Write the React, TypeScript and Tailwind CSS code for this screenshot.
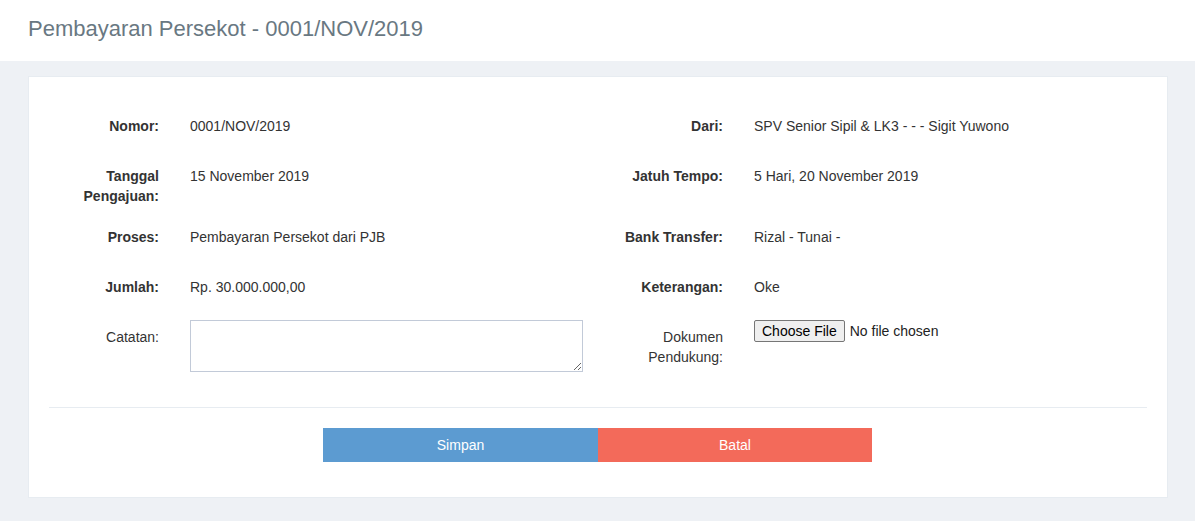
const font = "font-['Liberation_Sans',Arial,sans-serif]";

function Field({
  label,
  bold = true,
  labelWidth,
  children,
}: {
  label: React.ReactNode;
  bold?: boolean;
  labelWidth: string;
  children: React.ReactNode;
}) {
  return (
    <div className="flex flex-1">
      <div
        className={`${labelWidth} shrink-0 pt-[7px] text-right leading-[20px] ${
          bold ? "font-bold" : ""
        }`}
      >
        {label}
      </div>
      <div className="ml-[31px] mr-[15px] flex-1">{children}</div>
    </div>
  );
}

function Static({ children }: { children: React.ReactNode }) {
  return <div className="py-[7px] leading-[20px]">{children}</div>;
}

const rows: {
  h: string;
  left: [React.ReactNode, string];
  right: [React.ReactNode, string];
}[] = [
  { h: "h-[50px]", left: ["Nomor:", "0001/NOV/2019"], right: ["Dari:", "SPV Senior Sipil & LK3 - - - Sigit Yuwono"] },
  {
    h: "h-[61px]",
    left: [
      <>
        Tanggal
        <br />
        Pengajuan:
      </>,
      "15 November 2019",
    ],
    right: ["Jatuh Tempo:", "5 Hari, 20 November 2019"],
  },
  { h: "h-[50px]", left: ["Proses:", "Pembayaran Persekot dari PJB"], right: ["Bank Transfer:", "Rizal - Tunai -"] },
  { h: "h-[50px]", left: ["Jumlah:", "Rp. 30.000.000,00"], right: ["Keterangan:", "Oke"] },
];

export default function App() {
  return (
    <div className={`${font} min-h-[521px] bg-[#eef1f5] text-[14px] text-[#333]`}>
      <header className="h-[61px] bg-white px-[28px] pt-[14px]">
        <h1 className="text-[22px] leading-[30px] text-[#697882]">
          Pembayaran Persekot - 0001/NOV/2019
        </h1>
      </header>

      <div className="ml-[28px] mt-[15px] w-[1140px] border border-[#e7ecf1] bg-white px-[20px] pt-[32px] pb-[35px]">
        {rows.map((r, i) => (
          <div key={i} className={`flex ${r.h}`}>
            <Field label={r.left[0]} labelWidth="w-[110px]">
              <Static>{r.left[1]}</Static>
            </Field>
            <Field label={r.right[0]} labelWidth="w-[125px]">
              <Static>{r.right[1]}</Static>
            </Field>
          </div>
        ))}

        <div className="flex">
          <Field label="Catatan:" bold={false} labelWidth="w-[110px]">
            <textarea
              rows={2}
              className="block h-[52px] w-full resize-y border border-[#c2cad8] px-[12px] py-[6px] outline-none"
            />
          </Field>
          <Field
            label={
              <>
                Dokumen
                <br />
                Pendukung:
              </>
            }
            bold={false}
            labelWidth="w-[125px]"
          >
            <input
              type="file"
              className="block text-[14px] leading-[20px] text-[#222] file:mr-[5px] file:rounded-[2px] file:border file:border-[#767676] file:bg-[#efefef] file:px-[7px] file:py-0 file:text-[14px] file:leading-[20px] file:text-black"
            />
          </Field>
        </div>

        <div className="mt-[35px] border-t border-[#e7ecf1]" />

        <div className="mt-[20px] flex">
          <button className="ml-[274px] h-[34px] w-[275px] bg-[#5c9bd1] text-white">Simpan</button>
          <button className="h-[34px] w-[274px] bg-[#f36a5a] text-white">Batal</button>
        </div>
      </div>
    </div>
  );
}
